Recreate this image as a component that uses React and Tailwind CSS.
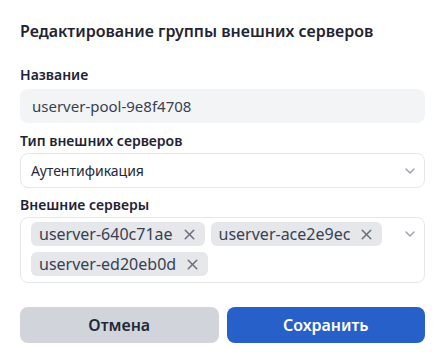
import { ChevronDown, X } from "lucide-react"

const servers = ["userver-640c71ae", "userver-ace2e9ec", "userver-ed20eb0d"]

function Chip({ label }) {
  return (
    <span className="flex h-6 items-center gap-2 rounded-md bg-[#e5e7eb] pr-[7px] pl-2 text-base text-[#374151]">
      {label}
      <X className="h-[17px] w-[17px] text-[#6b7280]" strokeWidth={2.2} />
    </span>
  )
}

export default function App() {
  return (
    <div className="h-[360px] w-[445px] bg-white px-5 pt-[19px] font-['Noto_Sans',sans-serif]">
      <h2 className="text-base leading-6 font-semibold text-[#1f2333]">
        Редактирование группы внешних серверов
      </h2>

      <label className="mt-[22px] block text-sm leading-5 font-semibold text-[#1f2333]">Название</label>
      <div className="mt-1 flex h-[34px] items-center rounded-lg bg-[#f3f4f6] px-3 text-[15px] text-[#374151]">
        userver-pool-9e8f4708
      </div>

      <label className="mt-2 block text-sm leading-5 font-semibold text-[#1f2333]">Тип внешних серверов</label>
      <div className="mt-[2px] flex h-[35px] items-center justify-between rounded-lg border border-[#e5e7eb] pr-[6px] pl-[10px] text-sm text-[#1f2937]">
        <span>Аутентификация</span>
        <ChevronDown className="h-4 w-4 text-[#9ca3af]" strokeWidth={2.2} />
      </div>

      <label className="mt-[7px] block text-sm leading-5 font-semibold text-[#1f2333]">Внешние серверы</label>
      <div className="mt-[2px] flex h-[66px] items-start justify-between rounded-lg border border-[#e5e7eb] pt-1 pr-[6px] pl-[10px]">
        <div className="flex flex-wrap gap-x-[6px] gap-y-[6px]">
          {servers.map((s) => (
            <Chip key={s} label={s} />
          ))}
        </div>
        <ChevronDown className="mt-1 h-4 w-4 shrink-0 text-[#9ca3af]" strokeWidth={2.2} />
      </div>

      <div className="mt-6 grid grid-cols-2 gap-2">
        <button className="h-9 rounded-lg bg-[#d1d5db] text-base font-semibold text-[#1f2937]">Отмена</button>
        <button className="h-9 rounded-lg bg-[#2760c8] text-base font-semibold text-white">Сохранить</button>
      </div>
    </div>
  )
}
